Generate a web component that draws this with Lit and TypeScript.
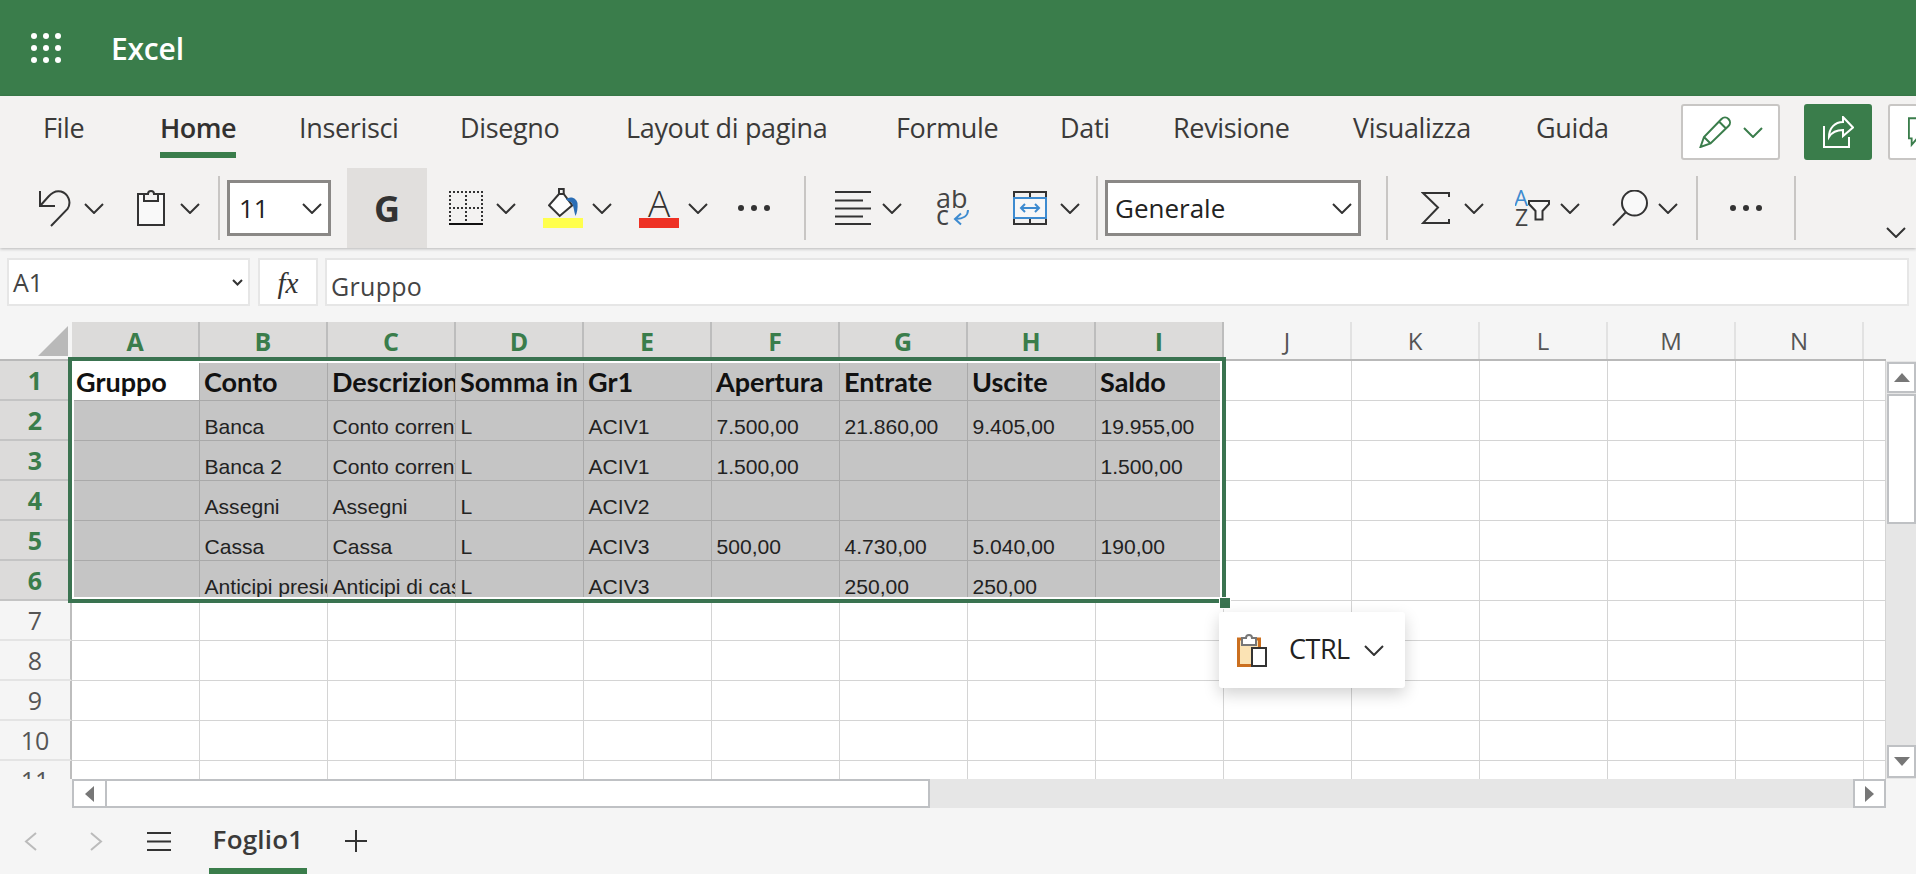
import { LitElement, html, css } from "lit";
import { customElement } from "lit/decorators.js";

const chev = (c = "#333") => html`<svg width="20" height="11" viewBox="0 0 20 11" fill="none"><path d="M1 1l9 9 9-9" stroke=${c} stroke-width="2"/></svg>`;
const dots = html`<svg width="32" height="8" viewBox="0 0 32 8" fill="#333"><circle cx="3" cy="4" r="3"/><circle cx="16" cy="4" r="3"/><circle cx="29" cy="4" r="3"/></svg>`;
const undo = html`<svg width="32" height="37" viewBox="0 0 32 37" fill="none" stroke="#333" stroke-width="2"><path d="M1 1v15h15"/><path d="M1 16L9.500 6.500C13 2.500 18 .5 22 1.500 29 3.500 33 12 28.500 19L12 36"/></svg>`;
const clip = html`<svg width="28" height="36" viewBox="0 0 28 36" fill="none" stroke="#333" stroke-width="2"><path d="M1 4h26v31H1z" fill="#f9f9f9"/><path d="M7 4v7h14V4h-4a3 3 0 0 0-6 0z" fill="#f3f2f1"/></svg>`;
const borders = html`<svg width="34" height="34" viewBox="0 0 34 34" fill="none" stroke="#333" stroke-width="2" stroke-dasharray="2 2"><path d="M0 1h34M0 17h34M1 0v33M17 0v33M33 0v33"/><path d="M0 33h34" stroke="#111" stroke-dasharray="none"/></svg>`;
const bucket = html`<svg width="30" height="30" viewBox="0 0 30 30" fill="none"><path d="M11 6V1h4.700v9" stroke="#333" stroke-width="2"/><path d="M11 6L1 17.300 11.700 28l12.600-10.700L15.700 6z" stroke="#333" stroke-width="2" fill="#fdfdfd"/><path d="M18 11.500C21 8 28 9 29.500 15 30 20 29 25 27.500 28 26 23 25.500 17 23.500 14.500 22 13 20 13.500 18 11.500z" fill="#2a6db5"/></svg>`;
const align = html`<svg width="36" height="34" viewBox="0 0 36 34" stroke="#333" stroke-width="2"><path d="M0 1h36M0 9.500h28M0 17.500h36M0 25.500h28M0 33h36"/></svg>`;
const wrap = html`<svg width="34" height="37" viewBox="0 0 34 37"><text class="ig" x="0" y="18" font-size="27" fill="#444">ab</text><text class="ig" x="0" y="35" font-size="27" fill="#444">c</text><path d="M32 20c0 6-5 9-12 9m5-5.500l-6 5.500 6 5.500" fill="none" stroke="#3d8bd0" stroke-width="2"/></svg>`;
const merge = html`<svg width="34" height="34" viewBox="0 0 34 34" fill="none"><path d="M1 6V1h32v5M17 1v5M1 27v6h32v-6M17 27v6" stroke="#333" stroke-width="2"/><path d="M1 7h32v20H1z" stroke="#3d8bd0" stroke-width="2" fill="#f7f7f7"/><path d="M8 17h18M12 13l-4 4 4 4M22 13l4 4-4 4" stroke="#3d8bd0" stroke-width="2"/></svg>`;
const sigma = html`<svg width="29" height="32" viewBox="0 0 29 32" fill="none" stroke="#333" stroke-width="2"><path d="M28 5V1H2l15 14.500L2 31h26v-4"/></svg>`;
const sort = html`<svg width="35" height="37" viewBox="0 0 35 37"><text class="ig" x="-1" y="16" font-size="22" fill="#3d8bd0">A</text><text class="ig" x="0" y="36" font-size="23" fill="#444">Z</text><path d="M14 11h20v3l-6.500 7v8.500h-7V21L14 14z" fill="#f7f7f7" stroke="#333" stroke-width="2"/></svg>`;
const search = html`<svg width="36" height="36" viewBox="0 0 36 36" fill="none" stroke="#333" stroke-width="2"><circle cx="22.500" cy="13" r="12.500" fill="#f9f9f9"/><path d="M13.500 22.500L1 35.500"/></svg>`;
const pencil = html`<svg width="32" height="32" viewBox="0 0 32 32" fill="none" stroke="#3a7d4b" stroke-width="2"><path d="M1.500 31L5 21 22.500 3c2-2 5-2 7 0s2 5 0 7L11.500 27.500zM5 21l6.500 6.500M20 5.500l6.500 6.500"/></svg>`;
const share = html`<svg width="31" height="32" viewBox="0 0 31 32" fill="none" stroke="#fff" stroke-width="2"><path d="M1 10v21h25v-10"/><path d="M20 1l10 10.500L20 20v-6c-6 0-11 2-14 7 0-9 6-15 14-15z"/></svg>`;
const comment = html`<svg width="24" height="32" viewBox="0 0 24 32" fill="none" stroke="#3a7d4b" stroke-width="2"><path d="M1 1h30v22H10l-6 7v-7H1z"/></svg>`;
const pasteIcon = html`<svg width="30" height="33" viewBox="0 0 30 33" fill="none"><path d="M1.500 5h21v26.500h-21z" fill="#fbe3b4" stroke="#cb6f1f" stroke-width="3"/><path d="M5 11V4h4a3 3 0 0 1 6 0h4v7z" fill="#fff" stroke="#777" stroke-width="2"/><path d="M15 14h14v18H15z" fill="#fff" stroke="#333" stroke-width="2"/></svg>`;

const tabs: [string, number][] = [["File", 117], ["Home", 139], ["Inserisci", 161], ["Disegno", 166], ["Layout di pagina", 270], ["Formule", 164], ["Dati", 113], ["Revisione", 180], ["Visualizza", 183], ["Guida", 145]];
const cols = "ABCDEFGHIJKLMN".split("");
const rows: string[][] = [
  ["Gruppo", "Conto", "Descrizione", "Somma in bilancio", "Gr1", "Apertura", "Entrate", "Uscite", "Saldo"],
  ["", "Banca", "Conto corrente", "L", "ACIV1", "7.500,00", "21.860,00", "9.405,00", "19.955,00"],
  ["", "Banca 2", "Conto corrente", "L", "ACIV1", "1.500,00", "", "", "1.500,00"],
  ["", "Assegni", "Assegni", "L", "ACIV2", "", "", "", ""],
  ["", "Cassa", "Cassa", "L", "ACIV3", "500,00", "4.730,00", "5.040,00", "190,00"],
  ["", "Anticipi presidente", "Anticipi di cassa", "L", "ACIV3", "", "250,00", "250,00", ""],
];

@customElement("app-root")
export class AppRoot extends LitElement {
  static styles = css`
    :host { display: block; width: 1916px; height: 874px; overflow: hidden; background: #f5f5f5; font-family: "Open Sans", sans-serif; color: #333; }
    .ig { font-family: "Open Sans", sans-serif; font-weight: 400; }
    .head { height: 96px; background: #3a7d4b; display: flex; align-items: center; padding-left: 31px; color: #fff; }
    .waffle { display: grid; grid-template-columns: repeat(3, 6px); gap: 6px; }
    .waffle i { width: 6px; height: 6px; border-radius: 50%; background: #fff; }
    .brand { margin-left: 50px; font-size: 30px; font-weight: 600; letter-spacing: -0.2px; }
    .ribbon { height: 152px; background: #f3f2f1; box-shadow: 0 1px 3px rgba(0,0,0,.25); position: relative; z-index: 2; overflow: hidden; }
    .tabs { height: 64px; padding: 8px 0 0 43px; display: flex; box-sizing: border-box; }
    .tab { flex: none; padding-top: 6px; font-size: 27px; letter-spacing: -0.35px; line-height: 36px; color: #3b3a39; }
    .tab span { display: inline-block; padding-bottom: 6px; }
    .tab.on span { font-weight: 600; letter-spacing: -0.55px; color: #323130; border-bottom: 6px solid #3a7d4b; }
    .rbtn { flex: none; height: 56px; box-sizing: border-box; border-radius: 3px; display: flex; align-items: center; border: 2px solid #c8c6c4; background: #fff; }
    .pen { width: 99px; gap: 12px; padding-left: 16px; }
    .shr { width: 68px; margin-left: 24px; background: #3a7d4b; border-color: #3a7d4b; justify-content: center; }
    .cmt { width: 44px; margin-left: 16px; padding-left: 18px; }
    .tools { height: 80px; margin-top: 8px; display: flex; align-items: center; }
    .tool { flex: none; display: flex; align-items: center; justify-content: center; }
    .sep { width: 2px; height: 64px; background: #c8c6c4; }
    .select { height: 56px; box-sizing: border-box; border: 3px solid #8a8886; background: #fff; display: flex; align-items: center; justify-content: space-between; padding: 0 6px 0 9px; color: #222; }
    .fs { width: 104px; font-size: 26px; }
    .num { width: 256px; font-size: 26px; padding-left: 7px; }
    .g { width: 80px; height: 80px; background: #e1dfdd; font-size: 36px; font-weight: 700; color: #333; }
    .swatch { width: 40px; height: 40px; display: flex; flex-direction: column; align-items: center; justify-content: flex-end; }
    .bar { width: 40px; height: 10px; flex: none; }
    .y { background: #ffff4d; }
    .r { background: #ee3124; }
    .letter { font-size: 37px; font-weight: 300; line-height: 30px; height: 30px; color: #333; }
    .end { align-self: flex-end; margin-bottom: 10px; }
    .fbar { height: 74px; padding: 10px 7px 16px 7px; box-sizing: border-box; display: flex; background: #f5f5f5; }
    .fbox { border: 2px solid #e6e6e6; background: #fff; box-sizing: border-box; height: 48px; display: flex; align-items: center; font-size: 25px; color: #444; }
    .name { width: 243px; padding: 0 5px 0 4px; justify-content: space-between; }
    .fx { width: 60px; margin-left: 8px; justify-content: center; font: italic 29px "Liberation Serif", serif; color: #333; padding-top: 2px; }
    .input { flex: 1; margin-left: 7px; padding: 8px 0 0 4px; letter-spacing: .3px; }
    .sheet { position: relative; height: 457px; }
    .colhead { display: grid; grid-template-columns: 72px repeat(14, 128px); height: 37px; }
    .corner { display: flex; justify-content: flex-end; align-items: flex-end; padding: 0 4px 3px 0; }
    .ch { display: flex; align-items: center; justify-content: center; border-right: 2px solid #e2e2e2; font-size: 24px; color: #555; }
    .ch.on { background: #dcdbda; border-right-color: #bdbdbd; color: #3a7d4b; font-size: 25px; font-weight: 700; }
    .body { display: flex; height: 420px; }
    .grid { width: 1886px; flex: none; height: 420px; overflow: hidden; border-top: 2px solid #b9b9b9; box-sizing: border-box; background: #fff; display: grid; grid-template-columns: 72px repeat(14, 128px) 22px; grid-auto-rows: 40px; }
    .rh { display: flex; align-items: center; justify-content: center; background: #f5f5f5; border-right: 2px solid #bdbdbd; border-bottom: 2px solid #e4e4e4; box-sizing: border-box; font-size: 25px; color: #555; }
    .rh.on { background: #dcdbda; border-bottom-color: #c4c4c4; color: #3a7d4b; font-weight: 700; }
    .c { box-sizing: border-box; border-right: 1px solid #d4d4d4; border-bottom: 1px solid #d4d4d4; overflow: hidden; white-space: nowrap; font: 21.1px/21px "Liberation Sans", sans-serif; color: #222; padding: 15px 0 0 4.5px; }
    .c.s { background: #c5c5c5; border-color: #a9a9a9; }
    .c.h { font: 700 27px/32px Lato, sans-serif; color: #111; padding: 5px 0 0 4px; }
    .c.first { background: #fff; }
    .sel { position: absolute; left: 68px; top: 35px; width: 1158px; height: 246px; box-sizing: border-box; border: 4px solid #3a7350; pointer-events: none; }
    .sel::after { content: ""; position: absolute; inset: 0; border: 2px solid #fff; }
    .handle { position: absolute; left: 1219px; top: 275px; width: 10px; height: 10px; background: #3a7350; border: 1px solid #fff; }
    .popup { position: absolute; left: 1219px; top: 290px; width: 186px; height: 76px; border-radius: 3px; background: #fff; box-shadow: 0 6px 16px rgba(0,0,0,.18); display: flex; align-items: center; padding-left: 18px; box-sizing: border-box; font-size: 27px; letter-spacing: -.5px; color: #222; }
    .popup b { font-weight: 400; margin: -3px 14px 0 22px; }
    .v { width: 30px; flex: none; background: #e6e6e6; display: flex; flex-direction: column; padding: 1px 0 1px 1px; box-sizing: border-box; margin-top: 2px; }
    .sb { box-sizing: border-box; border: 2px solid #bfc1c4; background: #fff; display: flex; align-items: center; justify-content: center; flex: none; }
    .vb { width: 29px; height: 31px; }
    .vt { width: 29px; height: 130px; margin-top: 1px; }
    .down { margin-top: auto; height: 33px; }
    .hs { display: flex; height: 29px; padding-left: 72px; }
    .ht { width: 1814px; background: #e6e6e6; display: flex; flex: none; }
    .hb { width: 35px; height: 29px; }
    .hth { width: 825px; height: 29px; margin-left: -2px; }
    .right { margin-left: auto; width: 33px; }
    .up { width: 0; height: 0; border: 8px solid transparent; border-top: 0; border-bottom: 9px solid #777; }
    .dn { width: 0; height: 0; border: 8px solid transparent; border-bottom: 0; border-top: 9px solid #777; }
    .lf { width: 0; height: 0; border: 8px solid transparent; border-left: 0; border-right: 9px solid #777; }
    .rt { width: 0; height: 0; border: 8px solid transparent; border-right: 0; border-left: 9px solid #777; }
    .bottom { height: 66px; display: flex; align-items: center; padding-left: 24px; }
    .sheetbtn { margin-left: 44px; }
    .foglio { margin-left: 38px; width: 98px; height: 66px; box-sizing: border-box; border-bottom: 6px solid #3a7d4b; font-size: 26px; font-weight: 600; letter-spacing: .2px; color: #3b3a39; text-align: center; line-height: 62px; }
    .add { margin-left: 38px; }
    .mr { margin-left: 53px; }
  `;

  private tools() {
    const sel = (cls: string, t: string) => html`<div class="select ${cls}"><span>${t}</span>${chev()}</div>`;
    const sep = html`<div class="sep"></div>`;
    const c = chev();
    const list: [number, unknown][] = [
      [39, undo], [13, c], [33, clip], [15, c], [18, sep], [7, sel("fs", "11")],
      [16, html`<div class="tool g">G</div>`], [22, borders], [13, c],
      [27, html`<div class="swatch">${bucket}<div class="bar y"></div></div>`], [9, c],
      [27, html`<div class="swatch"><div class="letter">A</div><div class="bar r"></div></div>`], [9, c],
      [30, dots], [34, sep], [29, align], [11, c], [34, wrap], [43, merge], [13, c], [16, sep],
      [7, sel("num", "Generale")], [25, sep], [33, sigma], [14, c], [31, sort], [10, c], [32, search], [10, c],
      [18, sep], [32, dots], [32, sep],
    ];
    return html`${list.map(([g, t]) => html`<div class="tool" style="margin-left:${g}px">${t}</div>`)}
      <div class="tool end" style="margin-left:90px">${c}</div>`;
  }

  render() {
    return html`
      <div class="head">
        <div class="waffle">${Array.from({ length: 9 }, () => html`<i></i>`)}</div>
        <div class="brand">Excel</div>
      </div>
      <div class="ribbon">
        <div class="tabs">
          ${tabs.map(([t, w]) => html`<div class="tab ${t === "Home" ? "on" : ""}" style="width:${w}px"><span>${t}</span></div>`)}
          <div class="rbtn pen">${pencil}${chev("#3a7d4b")}</div>
          <div class="rbtn shr">${share}</div>
          <div class="rbtn cmt">${comment}</div>
        </div>
        <div class="tools">${this.tools()}</div>
      </div>
      <div class="fbar">
        <div class="fbox name"><span>A1</span><svg width="11" height="7" viewBox="0 0 11 7" fill="none"><path d="M1 1l4.500 4.500L10 1" stroke="#333" stroke-width="2"/></svg></div>
        <div class="fbox fx">fx</div>
        <div class="fbox input">Gruppo</div>
      </div>
      <div class="sheet">
        <div class="colhead">
          <div class="corner"><svg width="30" height="30" viewBox="0 0 30 30"><path d="M30 0v30H0z" fill="#b9b9b9"/></svg></div>
          ${cols.map((l, i) => html`<div class="ch ${i < 9 ? "on" : ""}">${l}</div>`)}
        </div>
        <div class="body">
          <div class="grid">
            ${Array.from({ length: 11 }, (_, r) => html`
              <div class="rh ${r < 6 ? "on" : ""}">${r + 1}</div>
              ${cols.map((_l, k) => {
                const t = r < 6 && k < 9 ? rows[r][k] : "";
                const cl = ["c", r < 6 && k < 9 ? "s" : "", r === 0 ? "h" : "", r === 0 && k === 0 ? "first" : ""].join(" ");
                return html`<div class=${cl}>${t}</div>`;
              })}
              <div class="c"></div>`)}
          </div>
          <div class="v">
            <div class="sb vb"><div class="up"></div></div>
            <div class="sb vt"></div>
            <div class="sb vb down"><div class="dn"></div></div>
          </div>
        </div>
        <div class="sel"></div>
        <div class="handle"></div>
        <div class="popup">${pasteIcon}<b>CTRL</b>${chev()}</div>
      </div>
      <div class="hs">
        <div class="ht">
          <div class="sb hb"><div class="lf"></div></div>
          <div class="sb hth"></div>
          <div class="sb hb right"><div class="rt"></div></div>
        </div>
      </div>
      <div class="bottom">
        <svg width="13" height="19" viewBox="0 0 13 19" fill="none"><path d="M12 1L2 9.500 12 18" stroke="#bbb" stroke-width="2"/></svg>
        <svg class="mr" width="13" height="19" viewBox="0 0 13 19" fill="none"><path d="M1 1l10 8.500L1 18" stroke="#bbb" stroke-width="2"/></svg>
        <svg class="sheetbtn" width="24" height="19" viewBox="0 0 24 19" stroke="#333" stroke-width="2"><path d="M0 1h24M0 9.500h24M0 18h24"/></svg>
        <div class="foglio">Foglio1</div>
        <svg class="add" width="22" height="22" viewBox="0 0 22 22" stroke="#333" stroke-width="2"><path d="M0 11h22M11 0v22"/></svg>
      </div>
    `;
  }
}
